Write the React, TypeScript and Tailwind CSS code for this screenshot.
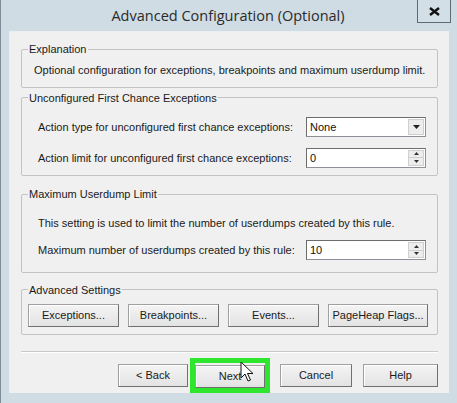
import React from "react";

const font = { fontFamily: '"Liberation Sans", Arial, sans-serif' };

function Btn({ label, className = "" }: { label: string; className?: string }) {
  return (
    <button
      className={`h-[23px] whitespace-nowrap border border-[#a0a0a0] border-r-[#707070] border-b-[#707070] bg-gradient-to-b from-[#f4f4f4] to-[#e3e3e3] text-[11px] text-[#1a1a1a] shadow-[inset_1px_1px_0_#fff] ${className}`}
    >
      {label}
    </button>
  );
}

function Spin({ value }: { value: string }) {
  return (
    <div className="flex h-[20px] w-[120px] border border-[#8d9096] border-t-[#6d6d6d] border-l-[#6d6d6d] bg-white">
      <span className="flex-1 pl-[3px] text-[11px] leading-[18px] text-[#111]">{value}</span>
      <div className="m-[1px] flex w-[16px] flex-col border border-[#cfcfcf] bg-[#ededed]">
        <div className="flex flex-1 items-center justify-center">
          <svg width="5" height="3" viewBox="0 0 5 3">
            <path d="M0 3 H5 L2.5 0 Z" fill="#333" />
          </svg>
        </div>
        <div className="flex flex-1 items-center justify-center border-t border-[#cfcfcf]">
          <svg width="5" height="3" viewBox="0 0 5 3">
            <path d="M0 0 H5 L2.5 3 Z" fill="#333" />
          </svg>
        </div>
      </div>
    </div>
  );
}

function Group({ title, className = "", children }: { title: string; className?: string; children: React.ReactNode }) {
  return (
    <fieldset className={`rounded-[2px] border border-[#c3c3c3] px-[6px] ${className}`}>
      <legend className="px-[1px] text-[11px] leading-[14px] text-[#1a1a1a]">{title}</legend>
      {children}
    </fieldset>
  );
}

const txt = "whitespace-nowrap text-[11px] leading-[14px] text-[#1a1a1a]";

export default function App() {
  return (
    <div style={font} className="flex h-[403px] w-[457px] flex-col border-l border-[#7d8c96] bg-[#cfdce4]">
      {/* title bar */}
      <div className="flex h-[31px] items-start">
        <div
          className="flex-1 pt-[6px] pl-[38px] text-center text-[14.5px] leading-[20px] text-[#2a2a2a]"
          style={{ fontFamily: '"Open Sans", "Noto Sans", sans-serif' }}
        >
          Advanced Configuration (Optional)
        </div>
        <div className="mr-[6px] flex h-[23px] w-[34px] items-center justify-center border border-t-0 border-[#5d6a73] bg-[#d2dfe7]">
          <svg width="11" height="9" viewBox="0 0 11 9">
            <path d="M1 1 L10 8 M10 1 L1 8" stroke="#111" strokeWidth="2.4" />
          </svg>
        </div>
      </div>

      {/* client area */}
      <div className="relative mx-[8px] flex h-[362px] flex-col border-t border-l border-[#e8eef2] bg-[#f0f0f0] px-[11px]">
        <Group title="Explanation" className="mt-[10px] h-[46px]">
          <p className={`mt-[7px] pl-[6px] ${txt}`}>
            Optional configuration for exceptions, breakpoints and maximum userdump limit.
          </p>
        </Group>

        <Group title="Unconfigured First Chance Exceptions" className="mt-[3px] h-[86px]">
          <div className="flex flex-col gap-[11px] pl-[10px] pr-[5px] pt-[12px]">
            <div className="flex items-center justify-between">
              <span className={txt}>Action type for unconfigured first chance exceptions:</span>
              <div className="flex h-[20px] w-[120px] border border-[#8d9096] border-t-[#6d6d6d] border-l-[#6d6d6d] bg-white">
                <span className="flex-1 pl-[3px] text-[11px] leading-[18px] text-[#111]">None</span>
                <div className="m-[1px] flex w-[16px] items-center justify-center border border-[#cfcfcf] bg-[#ededed]">
                  <svg width="7" height="4" viewBox="0 0 7 4">
                    <path d="M0 0 H7 L3.5 4 Z" fill="#222" />
                  </svg>
                </div>
              </div>
            </div>
            <div className="flex items-center justify-between">
              <span className={txt}>Action limit for unconfigured first chance exceptions:</span>
              <Spin value="0" />
            </div>
          </div>
        </Group>

        <Group title="Maximum Userdump Limit" className="mt-[11px] h-[86px]">
          <div className="flex flex-col pl-[10px] pr-[5px] pt-[15px]">
            <p className={txt}>This setting is used to limit the number of userdumps created by this rule.</p>
            <div className="mt-[10px] flex items-center justify-between">
              <span className={txt}>Maximum number of userdumps created by this rule:</span>
              <Spin value="10" />
            </div>
          </div>
        </Group>

        <Group title="Advanced Settings" className="mt-[10px] h-[53px]">
          <div className="mt-[7px] flex gap-[9px]">
            <Btn label="Exceptions..." className="w-[91px]" />
            <Btn label="Breakpoints..." className="w-[91px]" />
            <Btn label="Events..." className="w-[91px]" />
            <Btn label="PageHeap Flags..." className="w-[100px]" />
          </div>
        </Group>

        <div className="mt-[16px] h-[2px] border-t border-b border-t-[#c9c9c9] border-b-white" />

        <div className="mt-[5px] flex items-center justify-end">
          <Btn label="< Back" className="w-[70px]" />
          <div className="relative ml-[2px] border-[5px] border-[#2ee62e]">
            <Btn label="Next" className="w-[70px]" />
            <svg className="absolute left-[45px] top-[-2px]" width="14" height="22" viewBox="0 0 14 22">
              <path d="M1 1 V17 L5 13 L8 20 L10.5 19 L7.5 12.5 H13 Z" fill="#fff" stroke="#111" strokeWidth="1" strokeLinejoin="round" />
            </svg>
          </div>
          <Btn label="Cancel" className="ml-[10px] w-[72px]" />
          <Btn label="Help" className="ml-[11px] w-[75px]" />
        </div>
      </div>
    </div>
  );
}
